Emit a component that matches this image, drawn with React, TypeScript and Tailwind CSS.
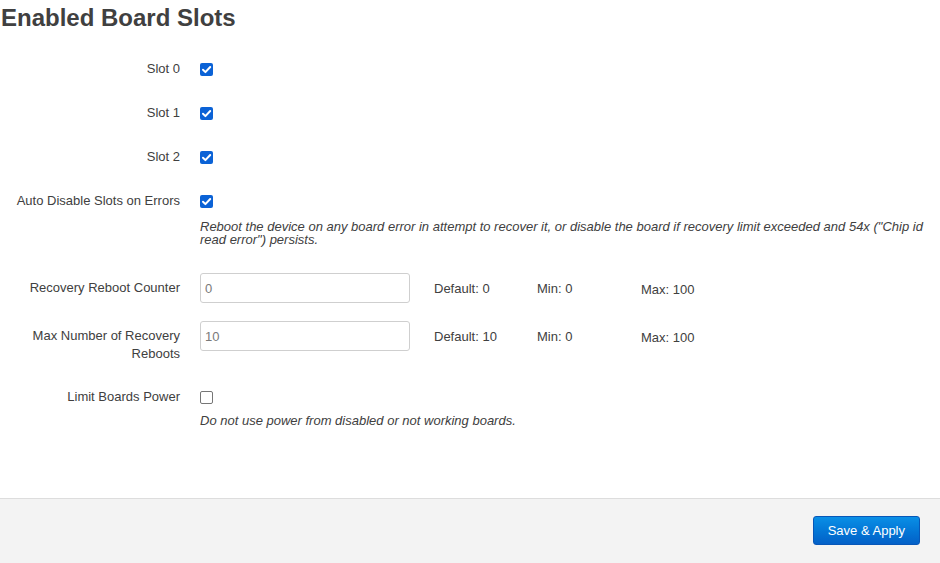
import React from "react";

function Check({ checked }: { checked: boolean }) {
  if (!checked) {
    return <span className="block w-[13px] h-[13px] rounded-[2px] border border-[#767676] bg-white" />;
  }
  return (
    <span className="flex w-[13px] h-[13px] items-center justify-center rounded-[2px] bg-[#0b62d6]">
      <svg viewBox="0 0 13 13" className="w-[13px] h-[13px]">
        <path d="M3 6.8 L5.4 9.1 L10.2 4" fill="none" stroke="#fff" strokeWidth="2" strokeLinecap="round" strokeLinejoin="round" />
      </svg>
    </span>
  );
}

function Label({ children, className = "" }: { children: React.ReactNode; className?: string }) {
  return <div className={`w-[180px] shrink-0 text-right leading-[18px] ${className}`}>{children}</div>;
}

function NumberRow({ label, value, def }: { label: React.ReactNode; value: string; def: string }) {
  return (
    <div className="flex items-start">
      <Label className="pt-[6px]">{label}</Label>
      <div className="ml-[20px] flex items-center h-[30px]">
        <input
          readOnly
          value={value}
          className="w-[210px] h-[30px] rounded-[3px] border border-[#cfcfcf] px-[4px] text-[13px] text-[#7a7a7a] outline-none"
        />
        <span className="ml-[24px] mt-[2px] w-[103px]">Default: {def}</span>
        <span className="mt-[2px] w-[104px]">Min: 0</span>
        <span className="mt-[4px]">Max: 100</span>
      </div>
    </div>
  );
}

export default function App() {
  const slots = ["Slot 0", "Slot 1", "Slot 2"];

  return (
    <div className="min-h-screen bg-white text-[13px] text-[#404040] font-['Liberation_Sans',Arial,sans-serif]">
      <div className="pr-[10px]">
        <h2 className="pt-[3px] pl-[1px] text-[24px] leading-[29px] font-bold text-[#404040]">Enabled Board Slots</h2>

        <div className="mt-[28px] flex flex-col gap-[26px]">
          {slots.map((s) => (
            <div key={s} className="flex items-center">
              <Label>{s}</Label>
              <div className="ml-[20px] flex h-[18px] items-center">
                <Check checked />
              </div>
            </div>
          ))}
        </div>

        <div className="mt-[26px] flex items-start">
          <Label>Auto Disable Slots on Errors</Label>
          <div className="ml-[20px] flex-1">
            <div className="flex h-[18px] items-center">
              <Check checked />
            </div>
            <p className="mt-[10px] italic leading-[13px]">
              Reboot the device on any board error in attempt to recover it, or disable the board if recovery limit exceeded and 54x ("Chip id read error") persists.
            </p>
          </div>
        </div>

        <div className="mt-[27px]">
          <NumberRow label="Recovery Reboot Counter" value="0" def="0" />
        </div>
        <div className="mt-[18px]">
          <NumberRow label={<>Max Number of Recovery<br />Reboots</>} value="10" def="10" />
        </div>

        <div className="mt-[25px] flex items-start">
          <Label>Limit Boards Power</Label>
          <div className="ml-[20px] flex-1">
            <div className="flex h-[18px] items-center">
              <Check checked={false} />
            </div>
            <p className="mt-[8px] italic leading-[13px]">Do not use power from disabled or not working boards.</p>
          </div>
        </div>
      </div>

      <div className="mt-[71px] flex justify-end border-t border-[#dddddd] bg-[#f3f3f3] px-[20px] pt-[17px] pb-[18px]">
        <button className="h-[29px] rounded-[3px] border border-[#0757b8] bg-gradient-to-b from-[#0a8fe6] to-[#0460c7] px-[14px] text-[13px] text-white">
          Save &amp; Apply
        </button>
      </div>
    </div>
  );
}
